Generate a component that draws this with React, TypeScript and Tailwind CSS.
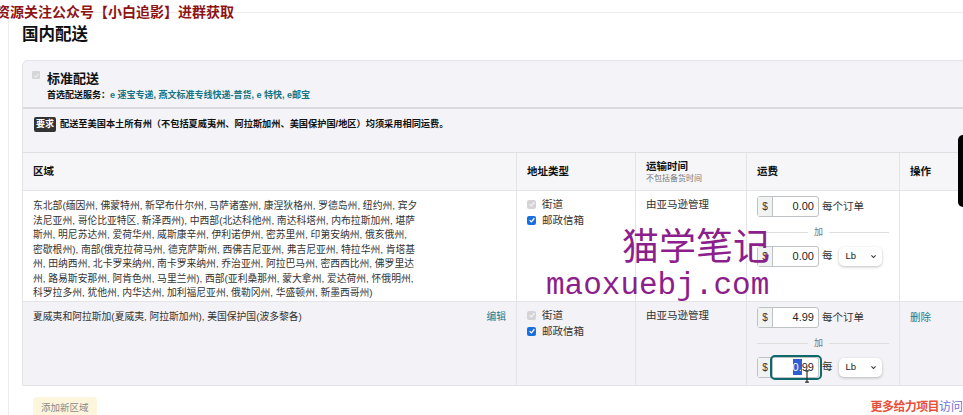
import React from "react";

const regionText =
  "东北部(缅因州, 佛蒙特州, 新罕布什尔州, 马萨诸塞州, 康涅狄格州, 罗德岛州, 纽约州, 宾夕法尼亚州, 哥伦比亚特区, 新泽西州), 中西部(北达科他州, 南达科塔州, 内布拉斯加州, 堪萨斯州, 明尼苏达州, 爱荷华州, 威斯康辛州, 伊利诺伊州, 密苏里州, 印第安纳州, 俄亥俄州, 密歇根州), 南部(俄克拉荷马州, 德克萨斯州, 西佛吉尼亚州, 弗吉尼亚州, 特拉华州, 肯塔基州, 田纳西州, 北卡罗来纳州, 南卡罗来纳州, 乔治亚州, 阿拉巴马州, 密西西比州, 佛罗里达州, 路易斯安那州, 阿肯色州, 马里兰州), 西部(亚利桑那州, 蒙大拿州, 爱达荷州, 怀俄明州, 科罗拉多州, 犹他州, 内华达州, 加利福尼亚州, 俄勒冈州, 华盛顿州, 新墨西哥州)";

function Check({ checked }: { checked: boolean }) {
  return (
    <span
      className={`flex h-[9px] w-[9px] items-center justify-center rounded-[2px] ${
        checked ? "bg-[#1a6fe0]" : "bg-[#d4d4d6]"
      }`}
    >
      <svg viewBox="0 0 10 10" className="h-[8px] w-[8px]">
        <path d="M2 5.2 L4.2 7.3 L8 2.8" fill="none" stroke={checked ? "#fff" : "#f2f2f2"} strokeWidth="1.6" />
      </svg>
    </span>
  );
}

function AddressTypes() {
  return (
    <div className="flex flex-col text-[10.5px] leading-[16px] text-[#333]">
      <label className="flex items-center gap-[6px]">
        <Check checked={false} />
        <span>街道</span>
      </label>
      <label className="flex items-center gap-[6px]">
        <Check checked />
        <span>邮政信箱</span>
      </label>
    </div>
  );
}

function PriceInput({ value, focused }: { value: string; focused?: boolean }) {
  return (
    <div className="flex h-[21px] w-[62px] rounded-[3px] border border-[#bfc2c4] bg-white">
      <span className="flex w-[15px] items-center justify-center border-r border-[#bfc2c4] bg-[#f1f2f2] text-[10px] text-[#333]">
        $
      </span>
      <span className="relative flex flex-1 items-center justify-end pr-[4px] text-[11px] text-[#222]">
        {focused ? (
          <>
            <span className="bg-[#2d5fd2] text-white">0.</span>
            <span>99</span>
            <span className="absolute -inset-y-[3px] -left-[3px] -right-[4px] rounded-[5px] border-2 border-[#0e6a6a]" />
            <svg viewBox="0 0 6 14" className="absolute right-[8px] top-[12px] h-[13px] w-[6px]">
              <path d="M1 1h4M3 1v12M1 13h4" stroke="#222" strokeWidth="1.2" fill="none" />
            </svg>
          </>
        ) : (
          value
        )}
      </span>
    </div>
  );
}

function Rates({ first, second, focused }: { first: string; second: string; focused?: boolean }) {
  return (
    <div className="flex flex-col">
      <div className="flex items-center gap-[3px]">
        <PriceInput value={first} />
        <span className="text-[10.5px] text-[#333]">每个订单</span>
      </div>
      <div className="mt-[9px] flex w-[132px] items-center gap-[6px] text-[9px] text-[#777]">
        <span className="h-px flex-1 bg-[#dedede]" />
        <span>加</span>
        <span className="h-px w-[60px] bg-[#dedede]" />
      </div>
      <div className="mt-[6px] flex items-center gap-[3px]">
        <PriceInput value={second} focused={focused} />
        <span className="text-[10.5px] text-[#333]">每</span>
        <div className="ml-[3px] flex h-[19px] w-[43px] items-center justify-between rounded-[5px] bg-white pl-[7px] pr-[5px] text-[9.5px] text-[#222] shadow-[0_1px_3px_rgba(0,0,0,0.25)]">
          <span>Lb</span>
          <svg viewBox="0 0 10 10" className="h-[7px] w-[7px]">
            <path d="M2 3.5 L5 6.5 L8 3.5" fill="none" stroke="#333" strokeWidth="1.5" />
          </svg>
        </div>
      </div>
    </div>
  );
}

const cell = "border-r border-[#e4e4e8] px-[10px]";
const head = `${cell} flex h-[38px] items-center border-b border-[#e0e0e4] bg-[#f6f6f9] text-[10.5px] font-bold`;

export default function App() {
  return (
    <div
      className="relative h-[415px] w-[963px] overflow-hidden bg-white text-[#0f1111]"
      style={{ fontFamily: '"Liberation Sans", "Noto Sans CJK SC", sans-serif' }}
    >
      <div className="pt-[12px]">
        <div className="ml-[8px] h-[420px] border-l border-t border-[#ececec] pl-[13px] pt-[9px]">
          <h2 className="text-[16.5px] font-semibold leading-[24px]">国内配送</h2>

          <div className="mt-[14px] w-[1000px] rounded-t-[6px] border border-[#e4e4e8] bg-[#f4f3f8]">
            <div className="flex h-[46px] gap-[7px] pl-[9px] pt-[9px]">
              <span className="mt-[1px] flex h-[8px] w-[8px] items-center justify-center rounded-[1px] bg-[#d6d6d9]">
                <svg viewBox="0 0 10 10" className="h-[7px] w-[7px]">
                  <path d="M2 5.2 L4.2 7.3 L8 2.8" fill="none" stroke="#eee" strokeWidth="1.5" />
                </svg>
              </span>
              <div className="flex flex-col">
                <span className="text-[13px] font-bold leading-[18px]">标准配送</span>
                <span className="text-[9px] font-bold leading-[14px]">
                  首选配送服务：
                  <span className="text-[#137585]">e 速宝专递, 燕文标准专线快递-普货, e 特快, e邮宝</span>
                </span>
              </div>
            </div>
            <div className="h-[2px] bg-[#dcdce0]" />
            <div className="flex h-[43px] items-start gap-[4px] pl-[11px] pt-[8px]">
              <span className="flex h-[15px] w-[22px] items-center justify-center rounded-[2px] bg-[#333] text-[9px] font-bold text-white">
                要求
              </span>
              <span className="text-[9.2px] font-bold leading-[15px]">
                配送至美国本土所有州（不包括夏威夷州、阿拉斯加州、美国保护国/地区）均须采用相同运费。
              </span>
            </div>

            <div className="grid grid-cols-[494px_119px_111px_153px_123px] border-t border-[#e0e0e4]">
              <div className={head}>区域</div>
              <div className={head}>地址类型</div>
              <div className={`${cell} flex h-[38px] flex-col justify-center border-b border-[#e0e0e4] bg-[#f6f6f9]`}>
                <span className="text-[10.5px] font-bold leading-[14px]">运输时间</span>
                <span className="text-[8px] leading-[12px] text-[#777]">不包括备货时间</span>
              </div>
              <div className={head}>运费</div>
              <div className={head}>操作</div>

              <div className={`${cell} h-[111px] border-b border-[#e0e0e4] bg-white pt-[8px]`}>
                <p className="w-[386px] text-[9.8px] leading-[14.5px] text-[#333]">{regionText}</p>
              </div>
              <div className={`${cell} border-b border-[#e0e0e4] bg-white pt-[5px]`}>
                <AddressTypes />
              </div>
              <div className={`${cell} border-b border-[#e0e0e4] bg-white pt-[5px] text-[10.5px] leading-[16px] text-[#333]`}>
                由亚马逊管理
              </div>
              <div className={`${cell} border-b border-[#e0e0e4] bg-white pt-[5px]`}>
                <Rates first="0.00" second="0.00" />
              </div>
              <div className={`${cell} border-b border-[#e0e0e4] bg-white`} />

              <div className={`${cell} flex h-[83px] items-start justify-between bg-[#f3f2f7] pt-[8px] text-[9.8px] leading-[14.5px] text-[#333]`}>
                <span>夏威夷和阿拉斯加(夏威夷, 阿拉斯加州), 美国保护国(波多黎各)</span>
                <span className="text-[#1b7d8c]">编辑</span>
              </div>
              <div className={`${cell} bg-[#f3f2f7] pt-[5px]`}>
                <AddressTypes />
              </div>
              <div className={`${cell} bg-[#f3f2f7] pt-[5px] text-[10.5px] leading-[16px] text-[#333]`}>
                由亚马逊管理
              </div>
              <div className={`${cell} bg-[#f3f2f7] pt-[5px]`}>
                <Rates first="4.99" second="0.99" focused />
              </div>
              <div className={`${cell} bg-[#f3f2f7] pt-[8px] text-[10.5px] leading-[14.5px] text-[#1b7d8c]`}>
                删除
              </div>
            </div>
          </div>

          <div className="pl-[11px] pt-[8px]">
            <span className="inline-flex h-[22px] items-center rounded-[4px] bg-[#fdf5dc] px-[8px] text-[9.5px] text-[#8a8a8a]">
              添加新区域
            </span>
          </div>
        </div>
      </div>

      {/* overlays */}
      <div
        className="absolute left-[-4px] top-[2px] text-[14px] font-bold leading-[18px] text-[#8e1414]"
        style={{ fontFamily: '"Noto Sans CJK SC", serif' }}
      >
        资源关注公众号【小白追影】进群获取
      </div>
      <div
        className="pointer-events-none absolute left-[622px] top-[222px] text-[37px] leading-[44px] text-[#8c1f8c]"
        style={{ fontFamily: '"Noto Sans CJK SC", sans-serif' }}
      >
        猫学笔记
      </div>
      <div
        className="pointer-events-none absolute left-[546px] top-[266px] text-[31px] leading-[40px] text-[#8c1f8c]"
        style={{ fontFamily: '"Liberation Mono", monospace' }}
      >
        maoxuebj.com
      </div>
      <div className="absolute right-0 top-[135px] h-[72px] w-[5px] rounded-l-[6px] bg-black" />
      <div
        className="absolute bottom-[1px] right-0 text-[12px] font-bold leading-[16px]"
        style={{ fontFamily: '"Noto Sans CJK SC", sans-serif' }}
      >
        <span className="tracking-[-0.6px] text-[#e8503a]">更多给力项目</span>
        <span className="font-normal text-[#6f72d8]">访问</span>
      </div>
    </div>
  );
}
